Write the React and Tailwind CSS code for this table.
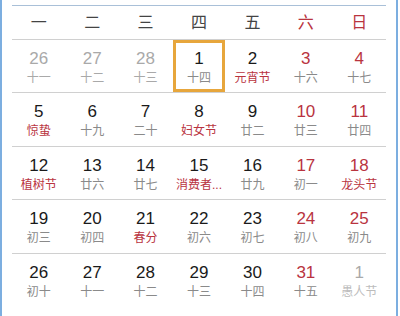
import React from 'react';

const weekDays = [
  { t: '一' }, { t: '二' }, { t: '三' }, { t: '四' }, { t: '五' },
  { t: '六', red: true }, { t: '日', red: true },
];

// other = prev/next month, red = weekend, fest = festival label
const rows = [
  {
    h: 'h-[53px]',
    days: [
      { d: 26, l: '十一', other: true },
      { d: 27, l: '十二', other: true },
      { d: 28, l: '十三', other: true },
      { d: 1, l: '十四', today: true },
      { d: 2, l: '元宵节', fest: true },
      { d: 3, l: '十六', red: true },
      { d: 4, l: '十七', red: true },
    ],
  },
  {
    h: 'h-[54px]',
    days: [
      { d: 5, l: '惊蛰', fest: true },
      { d: 6, l: '十九' },
      { d: 7, l: '二十' },
      { d: 8, l: '妇女节', fest: true },
      { d: 9, l: '廿二' },
      { d: 10, l: '廿三', red: true },
      { d: 11, l: '廿四', red: true },
    ],
  },
  {
    h: 'h-[53px]',
    days: [
      { d: 12, l: '植树节', fest: true },
      { d: 13, l: '廿六' },
      { d: 14, l: '廿七' },
      { d: 15, l: '消费者...', fest: true },
      { d: 16, l: '廿九' },
      { d: 17, l: '初一', red: true },
      { d: 18, l: '龙头节', red: true, fest: true },
    ],
  },
  {
    h: 'h-[54px]',
    days: [
      { d: 19, l: '初三' },
      { d: 20, l: '初四' },
      { d: 21, l: '春分', fest: true },
      { d: 22, l: '初六' },
      { d: 23, l: '初七' },
      { d: 24, l: '初八', red: true },
      { d: 25, l: '初九', red: true },
    ],
  },
  {
    h: 'h-[53px]',
    last: true,
    days: [
      { d: 26, l: '初十' },
      { d: 27, l: '十一' },
      { d: 28, l: '十二' },
      { d: 29, l: '十三' },
      { d: 30, l: '十四' },
      { d: 31, l: '十五', red: true },
      { d: 1, l: '愚人节', other: true, faint: true },
    ],
  },
];

const DayCell = ({ day }) => {
  const numColor = day.other
    ? 'text-[#a9a9a9]'
    : day.red
      ? 'text-[#b9343f]'
      : 'text-[#1a1a1a]';
  const lunarColor = day.faint
    ? 'text-[#bcbcbc]'
    : day.fest
      ? 'text-[#b9343f]'
      : day.other
        ? 'text-[#a9a9a9]'
        : 'text-[#8a8a8a]';

  return (
    <div className="h-full px-[1px]">
      <div
        className={`h-full flex flex-col items-center ${
          day.today ? 'border-[3px] border-[#e7a63c] pt-[6px]' : 'pt-[9px]'
        }`}
      >
        <span className={`text-[17px] leading-[20px] ${numColor}`}>{day.d}</span>
        <span className={`mt-[1px] text-[12px] leading-[16px] whitespace-nowrap ${lunarColor}`}>
          {day.l}
        </span>
      </div>
    </div>
  );
};

export default function App() {
  return (
    <div
      className="w-[400px] h-[316px] bg-white pr-[2px] overflow-hidden"
      style={{ fontFamily: '"Liberation Sans", "Noto Sans CJK SC", sans-serif' }}
    >
      <div className="h-full border-x-2 border-[#7caee0] px-[10px] pt-[5px]">
        {/* week header */}
        <div className="grid grid-cols-7 h-[35px] border-y border-t-[#a9c0d8] border-b-[#d0d0d0]">
          {weekDays.map((w) => (
            <div
              key={w.t}
              className={`flex items-center justify-center text-[16px] ${
                w.red ? 'text-[#b9343f]' : 'text-[#444]'
              }`}
            >
              {w.t}
            </div>
          ))}
        </div>

        {rows.map((row, i) => (
          <div
            key={i}
            className={`grid grid-cols-7 ${row.h} ${row.last ? '' : 'border-b border-[#d0d0d0]'}`}
          >
            {row.days.map((day, j) => (
              <DayCell key={j} day={day} />
            ))}
          </div>
        ))}
      </div>
    </div>
  );
}
